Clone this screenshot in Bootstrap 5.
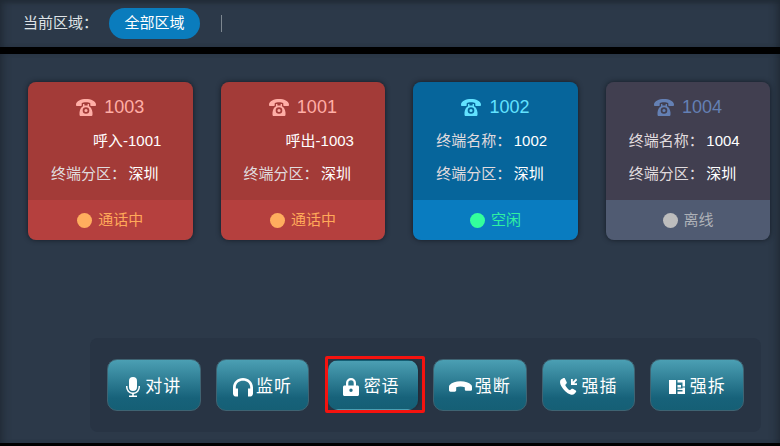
<!DOCTYPE html>
<html lang="zh"><head><meta charset="utf-8">
<link rel="stylesheet" href="https://cdn.jsdelivr.net/npm/bootstrap@5.3.0/dist/css/bootstrap.min.css">
<style>
html,body{width:780px;height:446px;overflow:hidden;background:#000}
body{font-family:"Liberation Sans","Noto Sans CJK SC",sans-serif;color:#fff}
.shell{width:780px;height:446px;background:#000;display:flex;flex-direction:column}
.topbar{height:47px;padding:0 0 0 23px;background:#2c3949;box-shadow:inset 0 6px 6px -4px #1f2833,inset 8px 0 8px -6px #1f2833,inset -8px 0 8px -6px #1f2833;font-size:15px;color:#dfe3e6}
.pill{background:#0a7cbd;color:#fff;border-radius:16px;width:91px;height:31px;font-size:15px;margin-left:11px}
.vsep{width:1px;height:17px;background:#7d8790;margin-left:21px}
.stage{margin-top:7px;height:389px;background:#2c3949;padding:28px 10px 11px 28px;box-shadow:inset 8px 0 8px -6px #1f2833,inset -8px 0 8px -6px #1f2833;display:flex;flex-direction:column}
.cards{display:grid;grid-template-columns:repeat(4,164.6px);column-gap:28px}
.term{height:158px;border-radius:8px;overflow:hidden;box-shadow:0 0 5px #141b24;display:flex;flex-direction:column}
.term-body{height:118px;font-size:15px}
.term-head{height:48px;padding-top:3px;font-size:18px;gap:8px}
.term-line{height:33px;padding-left:23px;color:#e0dbde}
.term-line b{font-weight:400;color:#fff;margin-left:2.500px}
.term-line .callinfo{margin-left:42px}
.term-line .callinfo b{margin-left:0}
.term-foot{height:40px;font-size:15px;gap:6px}
.dot{width:15px;height:15px;border-radius:50%}
.t-red .term-body{background:#a33b38}.t-red .term-foot{background:#b5403e;color:#ffa95a}.t-red .term-head{color:#ffaea6}.t-red .dot{background:#ffae5e}
.t-blue .term-body{background:#06659b}.t-blue .term-foot{background:#097cc0;color:#2ff0a2}.t-blue .term-head{color:#62e2ff}.t-blue .dot{background:#33ff9c}
.t-gray .term-body{background:#413f50}.t-gray .term-foot{background:#505b72;color:#aeb2b8}.t-gray .term-head{color:#6480b4}.t-gray .dot{background:#bdbdbd}
.dock{margin-top:auto;margin-left:62px;width:671px;height:94px;background:#283444;border-radius:8px;padding:21px 17px 0 17px;display:flex;justify-content:space-between;align-items:flex-start}
.act{position:relative;width:93.500px;height:52px;border-radius:10px;border:1px solid #3f6372;background:linear-gradient(#4b9fb3,#17627a 76%,#155f75);color:#fff;font-size:17px;letter-spacing:1px;line-height:1;padding:3px 0 0}
.act:hover{color:#fff}
.act svg{fill:#fff;flex:none}
.g1{gap:5px}.g2{gap:3px}.g3{gap:5px}
.act-lock{width:89.500px;margin-left:4px;margin-top:1px;height:50px;padding-right:4px;border-color:transparent;box-shadow:3px 0 3px -1px #222c38}
.hilite{position:absolute;left:-4.500px;top:-5px;width:100px;height:57px;border:3px solid #f5130f;border-radius:2px;pointer-events:none}
</style></head><body>
<svg width="0" height="0" class="d-block"><defs><symbol id="tel" viewBox="0 0 20 17"><path fill="currentColor" fill-rule="evenodd" d="M0 5.500C.2 2 5 0 10 0s9.800 2 10 5.500c0 1-.3 1.500-1.100 1.500h-3.600c-.7 0-1-.4-1-1.100V4.300C13.200 3.600 11.800 3.300 10 3.300s-3.200.3-4.300 1v1.600c0 .7-.3 1.100-1 1.100H1.100C.3 7 0 6.500 0 5.500zM7 5h1.400v1.500h3.200V5H13v2.200c2 1 3.300 3.800 3.500 6.300v1.900c0 1-.6 1.600-1.500 1.600H5c-.9 0-1.500-.6-1.500-1.600v-1.900C3.700 11 5 8.200 7 7.200zm3 3.200a3.300 3.300 0 1 0 0 6.600 3.300 3.300 0 0 0 0-6.600zm0 1.700a1.600 1.600 0 1 1 0 3.200 1.600 1.600 0 0 1 0-3.200z"/></symbol></defs></svg>
<div class="shell">
<div class="topbar d-flex align-items-center"><span>当前区域：</span><div class="pill d-flex align-items-center justify-content-center">全部区域</div><div class="vsep"></div></div>
<div class="stage">
<div class="cards">
<div class="term t-red"><div class="term-body"><div class="term-head d-flex align-items-center justify-content-center"><svg width="20" height="17"><use href="#tel"/></svg><span>1003</span></div><div class="term-line"><span class="callinfo"><b>呼入-1001</b></span></div><div class="term-line">终端分区：<b>深圳</b></div></div><div class="term-foot d-flex align-items-center justify-content-center"><i class="dot"></i><span>通话中</span></div></div>
<div class="term t-red"><div class="term-body"><div class="term-head d-flex align-items-center justify-content-center"><svg width="20" height="17"><use href="#tel"/></svg><span>1001</span></div><div class="term-line"><span class="callinfo"><b>呼出-1003</b></span></div><div class="term-line">终端分区：<b>深圳</b></div></div><div class="term-foot d-flex align-items-center justify-content-center"><i class="dot"></i><span>通话中</span></div></div>
<div class="term t-blue"><div class="term-body"><div class="term-head d-flex align-items-center justify-content-center"><svg width="20" height="17"><use href="#tel"/></svg><span>1002</span></div><div class="term-line">终端名称：<b>1002</b></div><div class="term-line">终端分区：<b>深圳</b></div></div><div class="term-foot d-flex align-items-center justify-content-center"><i class="dot"></i><span>空闲</span></div></div>
<div class="term t-gray"><div class="term-body"><div class="term-head d-flex align-items-center justify-content-center"><svg width="20" height="17"><use href="#tel"/></svg><span>1004</span></div><div class="term-line">终端名称：<b>1004</b></div><div class="term-line">终端分区：<b>深圳</b></div></div><div class="term-foot d-flex align-items-center justify-content-center"><i class="dot"></i><span>离线</span></div></div>
</div>
<div class="dock">
<button class="btn act g1 d-flex align-items-center justify-content-center"><svg width="14" height="20" viewBox="0 0 14 20"><path d="M7 0a4 4 0 0 1 4 4v6a4 4 0 0 1-8 0V4a4 4 0 0 1 4-4zM0 9h1.500v1a5.500 5.500 0 0 0 11 0V9H14v1a7 7 0 0 1-6.200 7v1.500H11V20H3v-1.500h3.200V17A7 7 0 0 1 0 10z"/></svg><span>对讲</span></button>
<button class="btn act g2 d-flex align-items-center justify-content-center"><svg width="20" height="20" viewBox="0 0 20 20"><path d="M10 1C4.500 1 0 5 0 10.500v6C0 18 1 19.500 2.500 19.500H5v-8H2.800v-1C2.800 6.400 6 3.700 10 3.700s7.200 2.700 7.200 6.800v1H15v8h2.500c1.500 0 2.500-1.500 2.500-3v-6C20 5 15.500 1 10 1z"/></svg><span>监听</span></button>
<button class="btn act act-lock g3 d-flex align-items-center justify-content-center"><svg width="16" height="18" viewBox="0 0 16 18"><path fill-rule="evenodd" d="M8 0a5 5 0 0 1 5 5v2.500h1.500c.8 0 1.500.7 1.500 1.500v7.500c0 .8-.7 1.500-1.500 1.500h-13C.7 18 0 17.300 0 16.500V9c0-.8.7-1.500 1.500-1.500H3V5a5 5 0 0 1 5-5zm0 2.300A2.700 2.700 0 0 0 5.300 5v2.500h5.400V5A2.700 2.700 0 0 0 8 2.300zM8 10.500a1.700 1.700 0 1 0 0 3.400 1.700 1.700 0 0 0 0-3.400z"/></svg><span>密语</span><i class="hilite"></i></button>
<button class="btn act g2 d-flex align-items-center justify-content-center"><svg width="23" height="11" viewBox="0 0 24 11"><path d="M12 0c5 0 9 1.500 11 3.600.8.800 1 1.500 1 2.400v2.500c0 .8-.7 1.500-1.500 1.500H18c-.8 0-1.500-.7-1.500-1.500V6.300C15.200 5.800 13.700 5.600 12 5.600s-3.200.2-4.500.7v3.200C7.500 10.300 6.800 11 6 11H1.500C.7 11 0 10.300 0 9.500V6c0-.9.200-1.600 1-2.400C3 1.500 7 0 12 0z"/></svg><span>强断</span></button>
<button class="btn act g3 d-flex align-items-center justify-content-center"><svg width="17" height="17" viewBox="0 0 17 17"><path d="M3.500 0 1 1.500C-.5 2.800-.2 5.500 1.500 8.500c2 3.500 5 6.800 9 8 1.500.5 3 .4 4-.7l1.500-1.800c.4-.5.3-1.100-.2-1.500L12.800 10.800c-.5-.3-1-.2-1.400.2L10 12.300C8 11.500 6 9 5.200 7l1.300-1.600c.4-.4.4-.9.100-1.400L4.800.3C4.500-.1 4-.2 3.500 0zM16 .5 12.800 3.700V1H11v6h6V5.200h-2.800L17.300 2z"/></svg><span>强插</span></button>
<button class="btn act g3 d-flex align-items-center justify-content-center"><svg width="16" height="16" viewBox="0 0 16 16"><path d="M0 1h7v14H0zM8.500 1H16v6.500h-2.500V3.500h-5zM8.500 6h3.500v2.500H8.500zM8.500 9.500h5V8.500H16V15H8.500v-2.500h5V11h-5z"/></svg><span>强拆</span></button>
</div>
</div>
</div>
</body></html>
